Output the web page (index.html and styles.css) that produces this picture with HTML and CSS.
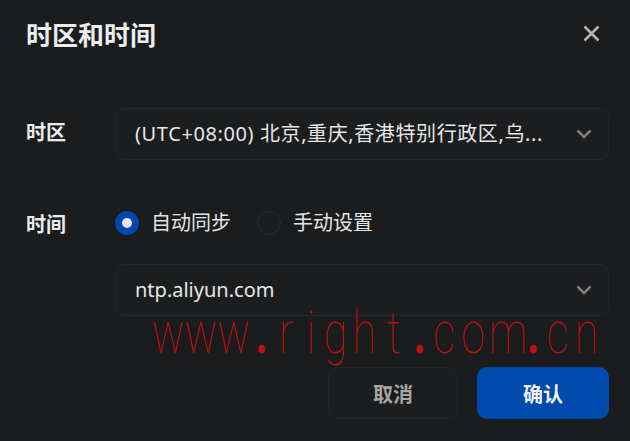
FILE: index.html
```html
<!DOCTYPE html>
<html lang="zh-CN">
<head>
<meta charset="utf-8">
<title>时区和时间</title>
<link rel="stylesheet" href="styles.css">
</head>
<body>
<div class="dialog">
  <header class="dlg-head">
    <h1 class="dlg-title">时区和时间</h1>
    <button class="close" aria-label="关闭">
      <svg width="17" height="17" viewBox="0 0 17 17"><path d="M1.5 1.5 L15.5 15.5 M15.5 1.5 L1.5 15.5" stroke="#b4b4b4" stroke-width="2.5" stroke-linecap="butt" fill="none"/></svg>
    </button>
  </header>

  <div class="form">
    <div class="row row-tz">
      <span class="lbl">时区</span>
      <div class="select">
        <span class="val val-tz">(UTC+08:00) 北京,重庆,香港特别行政区,乌...</span>
        <svg class="chev" width="16" height="10" viewBox="0 0 16 10"><path d="M1.5 1.5 L8 8 L14.5 1.5" stroke="#7e7e7e" stroke-width="2.5" fill="none"/></svg>
      </div>
    </div>

    <div class="row row-time">
      <span class="lbl">时间</span>
      <div class="radios">
        <span class="radio"><span class="dot checked"></span><span class="rtext">自动同步</span></span>
        <span class="radio"><span class="dot"></span><span class="rtext">手动设置</span></span>
      </div>
    </div>

    <div class="row row-ntp">
      <span class="lbl"></span>
      <div class="select">
        <span class="val">ntp.aliyun.com</span>
        <svg class="chev" width="16" height="10" viewBox="0 0 16 10"><path d="M1.5 1.5 L8 8 L14.5 1.5" stroke="#7e7e7e" stroke-width="2.5" fill="none"/></svg>
      </div>
    </div>
  </div>

  <footer class="actions">
    <button class="btn cancel">取消</button>
    <button class="btn ok">确认</button>
  </footer>

  <div class="watermark"><span class="xw">w</span><span class="xw">w</span><span class="xw">w</span><span class="nr pt">.</span><span class="md">r</span><span class="nr">i</span><span class="md">g</span><span class="wd">h</span><span class="tt">t</span><span class="nr pt">.</span><span class="md">c</span><span class="wd">o</span><span class="xw">m</span><span class="nr pt">.</span><span class="md">c</span><span class="wd">n</span></div>
</div>
</body>
</html>
```

FILE: styles.css
```css
* { box-sizing: border-box; }

html, body {
  margin: 0;
  padding: 0;
  background: #1b1c1e;
}

body {
  font-family: "Noto Sans", "Noto Sans CJK SC", sans-serif;
  color: #e8e8e8;
}

.dialog {
  position: relative;
  width: 630px;
  height: 441px;
  padding: 18px 21px 0 26px;
  background: #1b1c1e;
}

.dlg-head {
  display: flex;
  align-items: center;
  justify-content: space-between;
  height: 34px;
}

.dlg-title {
  margin: 0;
  font-size: 26px;
  line-height: 34px;
  font-weight: 700;
  color: #ececec;
}

.close {
  width: 36px;
  height: 32px;
  margin-top: -3px;
  padding: 0;
  border: 0;
  background: transparent;
  display: flex;
  align-items: center;
  justify-content: center;
}

.form {
  display: flex;
  flex-direction: column;
  margin-top: 56px;
}

.row {
  display: grid;
  grid-template-columns: 89px 1fr;
  align-items: center;
}

.row-time { margin-top: 49px; height: 24px; }
.row-ntp { margin-top: 31px; }

.lbl {
  font-size: 20px;
  font-weight: 700;
  color: #ececec;
  line-height: 24px;
}

.row-tz .lbl { margin-top: -3px; }
.row-time .lbl { margin-top: 4px; }

.select {
  display: flex;
  align-items: center;
  justify-content: space-between;
  height: 52px;
  padding: 0 16px 0 19px;
  background: #1c1d1f;
  border: 1px solid #242528;
  border-radius: 9px;
}

.val {
  font-size: 20px;
  line-height: 26px;
  color: #e6e6e6;
  white-space: nowrap;
  overflow: hidden;
}

.val-tz {
  letter-spacing: 0.6px;
}

.chev { flex: none; }

.radios {
  display: flex;
  align-items: center;
  gap: 26px;
}

.radio {
  display: flex;
  align-items: center;
  gap: 12px;
}

.dot {
  width: 24px;
  height: 24px;
  border-radius: 50%;
  border: 1px solid #2a2b2e;
  background: #1b1c1e;
}

.dot.checked {
  border: 7px solid #0048ad;
  background: #e6e6e6;
}

.rtext {
  font-size: 20px;
  line-height: 24px;
  color: #e4e4e4;
}

.actions {
  display: flex;
  justify-content: flex-end;
  gap: 19px;
  margin-top: 51px;
}

.btn {
  height: 52px;
  border-radius: 10px;
  font-family: "Noto Sans", "Noto Sans CJK SC", sans-serif;
  font-size: 20px;
  font-weight: 700;
  padding: 0;
}

.cancel {
  width: 130px;
  background: #1c1d1f;
  border: 1px solid #242528;
  color: #a6a6a6;
}

.ok {
  width: 132px;
  background: #004aad;
  border: 0;
  color: #f0f0f0;
}

.watermark {
  position: absolute;
  left: 152px;
  top: 303px;
  display: flex;
  font-family: Roboto, Lato, sans-serif;
  font-weight: 100;
  font-size: 60px;
  line-height: 60px;
  color: #bf1111;
  transform: scaleX(0.72);
  transform-origin: 0 0;
  pointer-events: none;
}

.watermark span {
  text-align: center;
  flex: none;
}

.watermark .pt { font-weight: 700; }

.watermark .xw { width: 45.5px; }
.watermark .wd { width: 43.8px; }
.watermark .tt { width: 38.9px; }
.watermark .md { width: 36.1px; }
.watermark .nr { width: 32.3px; }
```
